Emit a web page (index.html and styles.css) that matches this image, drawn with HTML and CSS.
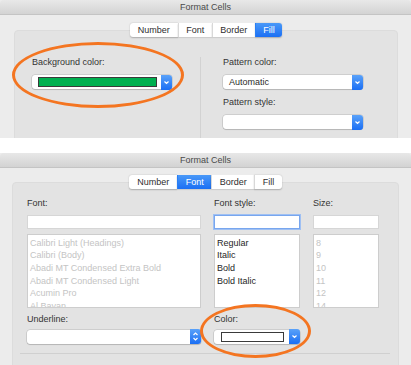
FILE: index.html
```html
<!DOCTYPE html>
<html lang="en">
<head>
    <meta charset="UTF-8">
    <title>Format Cells</title>
    <link rel="stylesheet" href="styles.css">
</head>
<body>

    <!-- Fill tab -->
    <div class="window window-fill">
        <div class="titlebar">Format Cells</div>
        <div class="window-body">
            <div class="tabs">
                <span class="tab tab-wide">Number</span>
                <span class="tab">Font</span>
                <span class="tab">Border</span>
                <span class="tab active">Fill</span>
            </div>
            <div class="panel fill-panel">
                <div class="fill-col">
                    <div class="field-label">Background color:</div>
                    <div class="popup">
                        <span class="swatch swatch-green"></span>
                        <span class="popup-btn">
                            <svg viewBox="0 0 11 14"><polyline points="3.5 6 5.5 8 7.5 6"></polyline></svg>
                        </span>
                    </div>
                </div>
                <div class="vsep"></div>
                <div class="fill-col">
                    <div class="field-label">Pattern color:</div>
                    <div class="popup">
                        <span class="popup-text">Automatic</span>
                        <span class="popup-btn">
                            <svg viewBox="0 0 11 14"><polyline points="3.5 6 5.5 8 7.5 6"></polyline></svg>
                        </span>
                    </div>
                    <div class="field-label">Pattern style:</div>
                    <div class="popup">
                        <span class="popup-text"></span>
                        <span class="popup-btn">
                            <svg viewBox="0 0 11 14"><polyline points="3.5 6 5.5 8 7.5 6"></polyline></svg>
                        </span>
                    </div>
                </div>
            </div>
        </div>
        <div class="highlight highlight-bg"></div>
    </div>

    <div class="spacer"></div>

    <!-- Font tab -->
    <div class="window window-font">
        <div class="titlebar">Format Cells</div>
        <div class="window-body">
            <div class="tabs">
                <span class="tab tab-wide">Number</span>
                <span class="tab active">Font</span>
                <span class="tab">Border</span>
                <span class="tab">Fill</span>
            </div>
            <div class="panel font-panel">
                <div class="font-grid">
                    <div class="field-label">Font:</div>
                    <div class="field-label">Font style:</div>
                    <div class="field-label">Size:</div>

                    <div class="input"></div>
                    <div class="input focused"></div>
                    <div class="input"></div>

                    <ul class="list muted">
                        <li>Calibri Light (Headings)</li>
                        <li>Calibri (Body)</li>
                        <li>Abadi MT Condensed Extra Bold</li>
                        <li>Abadi MT Condensed Light</li>
                        <li>Acumin Pro</li>
                        <li>Al Bayan</li>
                    </ul>
                    <ul class="list">
                        <li>Regular</li>
                        <li>Italic</li>
                        <li>Bold</li>
                        <li>Bold Italic</li>
                    </ul>
                    <ul class="list muted">
                        <li>8</li>
                        <li>9</li>
                        <li>10</li>
                        <li>11</li>
                        <li>12</li>
                        <li>14</li>
                    </ul>

                    <div class="field-label row-label">Underline:</div>
                    <div class="field-label row-label">Color:</div>
                    <div></div>

                    <div class="popup row-popup">
                        <span class="popup-text"></span>
                        <span class="popup-btn">
                            <svg viewBox="0 0 11 14"><polyline points="3.5 5.5 5.5 3.5 7.5 5.5"></polyline><polyline points="3.5 8.5 5.5 10.5 7.5 8.5"></polyline></svg>
                        </span>
                    </div>
                    <div class="popup row-popup">
                        <span class="swatch swatch-white"></span>
                        <span class="popup-btn">
                            <svg viewBox="0 0 11 14"><polyline points="3.5 6 5.5 8 7.5 6"></polyline></svg>
                        </span>
                    </div>
                </div>
                <div class="hsep"></div>
            </div>
        </div>
        <div class="highlight highlight-color"></div>
    </div>

</body>
</html>
```

FILE: styles.css
```css
/* Base */
body {
    margin: 0;
    width: 411px;
    background: #ffffff;
    font-family: "Liberation Sans", Arial, sans-serif;
    font-size: 9px;
    color: #333333;
}

/* Window */
.window {
    position: relative;
    overflow: hidden;
    background-color: #ececec;
}

.window-fill {
    height: 138px;
}

.window-font {
    height: 212px;
}

.spacer {
    height: 15px;
}

.titlebar {
    height: 14px;
    line-height: 14px;
    text-align: center;
    color: #4a4a4a;
    background: linear-gradient(#e8e8e8, #d3d3d3);
    border-bottom: 1px solid #c4c4c4;
    border-radius: 4px 4px 0 0;
}

.window-fill .window-body {
    padding: 8px 13px 0 14px;
}

.window-font .window-body {
    padding: 7px 12px 0 12px;
}

/* Segmented tabs */
.tabs {
    position: relative;
    z-index: 1;
    display: flex;
    justify-content: center;
    height: 14px;
}

.tab {
    height: 14px;
    line-height: 14px;
    padding: 0 7.5px;
    background: #ffffff;
    color: #2e2e2e;
    border-left: 1px solid #d8d8d8;
    box-shadow: 0 0.5px 1.5px rgba(0, 0, 0, 0.25);
}

.tab:first-child {
    border-left: none;
    border-radius: 3px 0 0 3px;
}

.tab:last-child {
    border-radius: 0 3px 3px 0;
}

.tab-wide {
    padding: 0 8px;
}

.tab.active {
    color: #ffffff;
    border-left-color: #2a7ff5;
    background: linear-gradient(#4a99f8, #1b6ff4);
}

/* Panel */
.panel {
    background-color: #e3e3e3;
    border: 1px solid #dcdcdc;
    border-radius: 4px;
}

.fill-panel {
    margin-top: -7px;
    height: 130px;
    display: flex;
    padding: 26px 0 0 17px;
}

.font-panel {
    margin-top: -7px;
    height: 220px;
    padding: 15px 0 0 14px;
}

.field-label {
    height: 11px;
    line-height: 11px;
    color: #333333;
}

/* Fill tab columns */
.fill-col {
    width: 140px;
}

.fill-col .field-label {
    margin-bottom: 7px;
}

.fill-col .popup {
    margin-bottom: 8px;
}

.vsep {
    width: 1px;
    margin: 0 22px 0 28px;
    background-color: #d2d2d2;
}

/* Popup buttons */
.popup {
    display: flex;
    align-items: center;
    height: 14px;
    background: #ffffff;
    border-radius: 3px;
    box-shadow: 0 0 0 0.5px rgba(0, 0, 0, 0.18), 0 1px 1px rgba(0, 0, 0, 0.12);
}

.popup-text {
    flex: 1;
    padding-left: 6px;
    line-height: 14px;
    color: #2a2a2a;
}

.popup-btn {
    margin-left: auto;
    width: 11px;
    height: 15px;
    border-radius: 0 3px 3px 0;
    background: linear-gradient(#5aa2f9, #1a6ef4);
}

.popup-btn svg {
    display: block;
    width: 11px;
    height: 15px;
    fill: none;
    stroke: #ffffff;
    stroke-width: 1.2;
}

.swatch {
    height: 8px;
    border: 1px solid #3a3a3a;
}

.swatch-green {
    margin-left: 6px;
    width: 117px;
    background-color: #00b050;
}

.swatch-white {
    margin-left: 7px;
    width: 61px;
    background-color: #ffffff;
}

/* Font tab grid */
.font-grid {
    display: grid;
    grid-template-columns: 174px 86px 66px;
    column-gap: 13px;
}

.input {
    margin-top: 6px;
    height: 12px;
    background: #ffffff;
    border: 1px solid #d6d6d6;
}

.input.focused {
    border-color: #78a6ee;
    box-shadow: 0 0 0 1px #9fc0f3;
}

.list {
    margin: 5px 0 0;
    padding: 1.5px 2px 0;
    height: 70px;
    list-style: none;
    overflow: hidden;
    background: #ffffff;
    border: 1px solid #cdcdcd;
    color: #262626;
}

.list li {
    height: 12.7px;
    line-height: 12.7px;
    white-space: nowrap;
}

.list.muted {
    color: #c4c4c4;
}

.row-label {
    margin-top: 6px;
}

.row-popup {
    margin-top: 5px;
}

.hsep {
    height: 1px;
    margin: 9px 8px 0 -7px;
    background-color: #d0d0d0;
}

/* Orange callout rings */
.highlight {
    position: absolute;
    box-sizing: border-box;
    border: 3px solid #f47521;
    border-radius: 50%;
}

.highlight-bg {
    left: 12px;
    top: 42px;
    width: 172px;
    height: 66px;
}

.highlight-color {
    left: 200px;
    top: 151px;
    width: 111px;
    height: 54px;
}
```
